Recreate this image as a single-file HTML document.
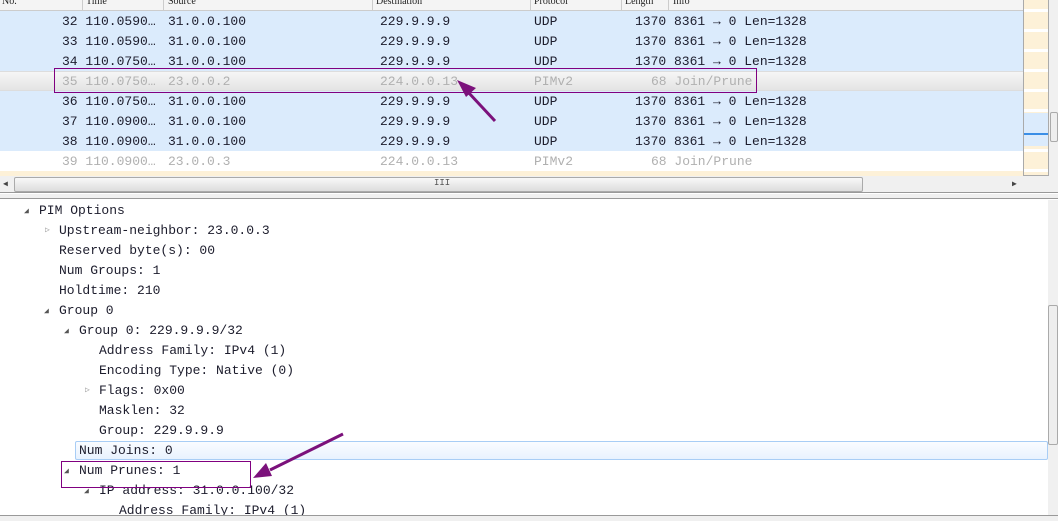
<!DOCTYPE html>
<html><head><meta charset="utf-8"><style>
*{margin:0;padding:0;box-sizing:border-box}
body{width:1058px;height:521px;overflow:hidden;background:#fff;font-family:"Liberation Mono","DejaVu Sans Mono",monospace;font-size:13px;color:#1c1c2c;position:relative}
.hdr{position:absolute;left:0;top:0;width:1023px;height:11px;background:#f4f4f4;border-bottom:1px solid #ccc;font-family:"Liberation Serif",serif;font-size:10px;line-height:6px;overflow:hidden;color:#222}
.hdr span{position:absolute;top:-1px}
.hdr i{position:absolute;top:0;height:11px;border-left:1px solid #ccc}
.row{position:absolute;left:0;width:1023px;height:20px;line-height:22px;background:#dbebfc}
.row span{position:absolute;top:0;white-space:pre}
.g{color:#b0b0b0}
.sel{background:linear-gradient(#f6f6f6,#e4e4e4);border-top:1px solid #ddd;border-bottom:1px solid #ddd}
.sel span{top:-1px}
.d{position:absolute;line-height:22px;height:20px;white-space:pre}
.tri{position:absolute;font-size:8px;color:#555}
</style></head><body>
<div class="hdr"><span style="left:2px">No.</span><i style="left:82px"></i><span style="left:86px">Time</span><i style="left:163px"></i><span style="left:168px">Source</span><i style="left:372px"></i><span style="left:376px">Destination</span><i style="left:530px"></i><span style="left:534px">Protocol</span><i style="left:621px"></i><span style="left:625px">Length</span><i style="left:668px"></i><span style="left:673px">Info</span></div>

<div class="row" style="top:11px"><span style="left:62px">32 110.0590…</span><span style="left:168px">31.0.0.100</span><span style="left:380px">229.9.9.9</span><span style="left:534px">UDP</span><span style="left:635px">1370 8361 → 0 Len=1328</span></div>
<div class="row" style="top:31px"><span style="left:62px">33 110.0590…</span><span style="left:168px">31.0.0.100</span><span style="left:380px">229.9.9.9</span><span style="left:534px">UDP</span><span style="left:635px">1370 8361 → 0 Len=1328</span></div>
<div class="row" style="top:51px"><span style="left:62px">34 110.0750…</span><span style="left:168px">31.0.0.100</span><span style="left:380px">229.9.9.9</span><span style="left:534px">UDP</span><span style="left:635px">1370 8361 → 0 Len=1328</span></div>
<div class="row sel g" style="top:71px"><span style="left:62px">35 110.0750…</span><span style="left:168px">23.0.0.2</span><span style="left:380px">224.0.0.13</span><span style="left:534px">PIMv2</span><span style="left:651px">68 Join/Prune</span></div>
<div class="row" style="top:91px"><span style="left:62px">36 110.0750…</span><span style="left:168px">31.0.0.100</span><span style="left:380px">229.9.9.9</span><span style="left:534px">UDP</span><span style="left:635px">1370 8361 → 0 Len=1328</span></div>
<div class="row" style="top:111px"><span style="left:62px">37 110.0900…</span><span style="left:168px">31.0.0.100</span><span style="left:380px">229.9.9.9</span><span style="left:534px">UDP</span><span style="left:635px">1370 8361 → 0 Len=1328</span></div>
<div class="row" style="top:131px"><span style="left:62px">38 110.0900…</span><span style="left:168px">31.0.0.100</span><span style="left:380px">229.9.9.9</span><span style="left:534px">UDP</span><span style="left:635px">1370 8361 → 0 Len=1328</span></div>
<div class="row g" style="top:151px;background:#fff"><span style="left:62px">39 110.0900…</span><span style="left:168px">23.0.0.3</span><span style="left:380px">224.0.0.13</span><span style="left:534px">PIMv2</span><span style="left:651px">68 Join/Prune</span></div>
<div style="position:absolute;left:0;top:171px;width:1023px;height:5px;background:#fdf1d8"></div>

<div style="position:absolute;left:1023px;top:0;width:26px;height:176px;border:1px solid #aaa;border-top:none;background:repeating-linear-gradient(#fdf1d8 0 9px,#fff 9px 12px,#fdf1d8 12px 20px)"></div>
<div style="position:absolute;left:1024px;top:113px;width:24px;height:33px;background:#dbebfc"></div>
<div style="position:absolute;left:1024px;top:133px;width:24px;height:2px;background:#3a8ee6"></div>
<div style="position:absolute;left:1049px;top:0;width:9px;height:176px;background:#f0f0f0"></div>
<div style="position:absolute;left:1050px;top:112px;width:8px;height:30px;border:1px solid #aaa;background:#eee;border-radius:2px"></div>

<div style="position:absolute;left:0;top:176px;width:1058px;height:17px;background:#f0f0f0;border-bottom:1px solid #999"></div>
<div style="position:absolute;left:3px;top:179px;font-size:8px;color:#444">◀</div>
<div style="position:absolute;left:14px;top:177px;width:849px;height:15px;border:1px solid #aaa;border-radius:2px;background:linear-gradient(#f8f8f8,#ddd)"></div>
<div style="position:absolute;left:434px;top:178px;font-size:9px;color:#555">III</div>
<div style="position:absolute;left:1012px;top:179px;font-size:8px;color:#444">▶</div>
<div style="position:absolute;left:0;top:194px;width:1058px;height:5px;background:#f0f0f0;border-bottom:1px solid #999"></div>

<div style="position:absolute;left:1048px;top:200px;width:10px;height:315px;background:#f0f0f0"></div>
<div style="position:absolute;left:1048px;top:305px;width:10px;height:140px;border:1px solid #aaa;border-radius:2px;background:#eee"></div>
<div style="position:absolute;left:75px;top:441px;width:973px;height:19px;border:1px solid #a8cdf5;border-radius:2px;background:linear-gradient(#fafcff,#e8f2fe)"></div>

<span class="tri" style="left:24px;top:206px">◢</span><div class="d" style="left:39px;top:200px">PIM Options</div>
<span class="tri" style="left:45px;top:225px;color:#999">▷</span><div class="d" style="left:59px;top:220px">Upstream-neighbor: 23.0.0.3</div>
<div class="d" style="left:59px;top:240px">Reserved byte(s): 00</div>
<div class="d" style="left:59px;top:260px">Num Groups: 1</div>
<div class="d" style="left:59px;top:280px">Holdtime: 210</div>
<span class="tri" style="left:44px;top:306px">◢</span><div class="d" style="left:59px;top:300px">Group 0</div>
<span class="tri" style="left:64px;top:326px">◢</span><div class="d" style="left:79px;top:320px">Group 0: 229.9.9.9/32</div>
<div class="d" style="left:99px;top:340px">Address Family: IPv4 (1)</div>
<div class="d" style="left:99px;top:360px">Encoding Type: Native (0)</div>
<span class="tri" style="left:85px;top:385px;color:#999">▷</span><div class="d" style="left:99px;top:380px">Flags: 0x00</div>
<div class="d" style="left:99px;top:400px">Masklen: 32</div>
<div class="d" style="left:99px;top:420px">Group: 229.9.9.9</div>
<div class="d" style="left:79px;top:440px">Num Joins: 0</div>
<span class="tri" style="left:64px;top:466px">◢</span><div class="d" style="left:79px;top:460px">Num Prunes: 1</div>
<span class="tri" style="left:84px;top:486px">◢</span><div class="d" style="left:99px;top:480px">IP address: 31.0.0.100/32</div>
<div class="d" style="left:119px;top:500px">Address Family: IPv4 (1)</div>
<div style="position:absolute;left:0;top:515px;width:1058px;height:6px;background:#f0f0f0;border-top:1px solid #999"></div>

<div style="position:absolute;left:54px;top:68px;width:703px;height:25px;border:1px solid #800080"></div>
<div style="position:absolute;left:61px;top:461px;width:190px;height:27px;border:1px solid #800080"></div>
<svg style="position:absolute;left:0;top:0" width="1058" height="521">
<path d="M495 121 L468 92" stroke="#7b117b" stroke-width="3"/>
<path d="M457 80 L476 88 L466 97 Z" fill="#7b117b"/>
<path d="M343 434 L270 470" stroke="#7b117b" stroke-width="3"/>
<path d="M253 478 L266 463 L272 476 Z" fill="#7b117b"/>
</svg>
</body></html>
